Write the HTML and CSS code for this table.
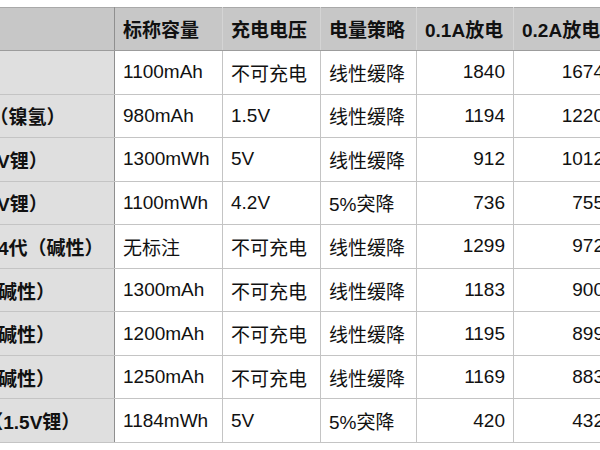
FILE: index.html
```html
<!DOCTYPE html>
<html lang="zh-CN">
<head>
<meta charset="utf-8">
<title>电池放电测试</title>
<link rel="stylesheet" href="styles.css">
</head>
<body>
<div class="sheet">
  <table class="grid">
    <colgroup>
      <col class="c-name">
      <col class="c-cap">
      <col class="c-volt">
      <col class="c-mode">
      <col class="c-d1">
      <col class="c-d2">
    </colgroup>
    <thead>
      <tr>
        <th class="name">型号</th>
        <th>标称容量</th>
        <th>充电电压</th>
        <th>电量策略</th>
        <th>0.1A放电</th>
        <th>0.2A放电</th>
      </tr>
    </thead>
    <tbody>
      <tr><td class="name">南孚聚能环</td><td>1100mAh</td><td>不可充电</td><td>线性缓降</td><td class="num">1840</td><td class="num">1674</td></tr>
      <tr><td class="name">爱乐普5号（镍氢）</td><td>980mAh</td><td>1.5V</td><td>线性缓降</td><td class="num">1194</td><td class="num">1220</td></tr>
      <tr><td class="name">倍量5（1.5V锂）</td><td>1300mWh</td><td>5V</td><td>线性缓降</td><td class="num">912</td><td class="num">1012</td></tr>
      <tr><td class="name">品胜5（1.5V锂）</td><td>1100mWh</td><td>4.2V</td><td>5%突降</td><td class="num">736</td><td class="num">755</td></tr>
      <tr><td class="name">南孚聚能环4代（碱性）</td><td>无标注</td><td>不可充电</td><td>线性缓降</td><td class="num">1299</td><td class="num">972</td></tr>
      <tr><td class="name">双鹿电池（碱性）</td><td>1300mAh</td><td>不可充电</td><td>线性缓降</td><td class="num">1183</td><td class="num">900</td></tr>
      <tr><td class="name">白象电池（碱性）</td><td>1200mAh</td><td>不可充电</td><td>线性缓降</td><td class="num">1195</td><td class="num">899</td></tr>
      <tr><td class="name">超霸电池（碱性）</td><td>1250mAh</td><td>不可充电</td><td>线性缓降</td><td class="num">1169</td><td class="num">883</td></tr>
      <tr><td class="name">京东京造 （1.5V锂）</td><td>1184mWh</td><td>5V</td><td>5%突降</td><td class="num">420</td><td class="num">432</td></tr>
    </tbody>
  </table>
</div>
</body>
</html>
```

FILE: styles.css
```css
html, body {
  margin: 0;
  padding: 0;
  background: #ffffff;
}

.sheet {
  width: 600px;
  height: 450px;
  overflow: hidden;
  padding-top: 7px;
  box-sizing: border-box;
}

.grid {
  margin-left: -106px;
  border-collapse: collapse;
  table-layout: fixed;
  width: 718px;
  font-family: "Liberation Sans", "Noto Sans CJK SC", sans-serif;
  font-size: 19px;
  color: #111111;
}

.c-name { width: 220px; }
.c-cap  { width: 108px; }
.c-volt { width: 98px; }
.c-mode { width: 96px; }
.c-d1   { width: 97px; }
.c-d2   { width: 99px; }

.grid th,
.grid td {
  border: 1px solid #c4c4c4;
  padding: 0 8px;
  text-align: left;
  white-space: nowrap;
  overflow: hidden;
}

.grid thead tr {
  height: 43px;
}

.grid tbody tr {
  height: 43.56px;
}

.grid th {
  background: #c7c7c7;
  font-weight: bold;
  padding-bottom: 2px;
  border-top: 1px solid #a9a9a9;
  border-bottom: 1px solid #9c9c9c;
  border-left-color: #d4d4d4;
  border-right-color: #d4d4d4;
}

.grid td.name {
  background: #dfdfdf;
  font-weight: bold;
}

.grid .name {
  border-right: 1px solid #8f8f8f;
}

.grid td.num {
  text-align: right;
}
```
